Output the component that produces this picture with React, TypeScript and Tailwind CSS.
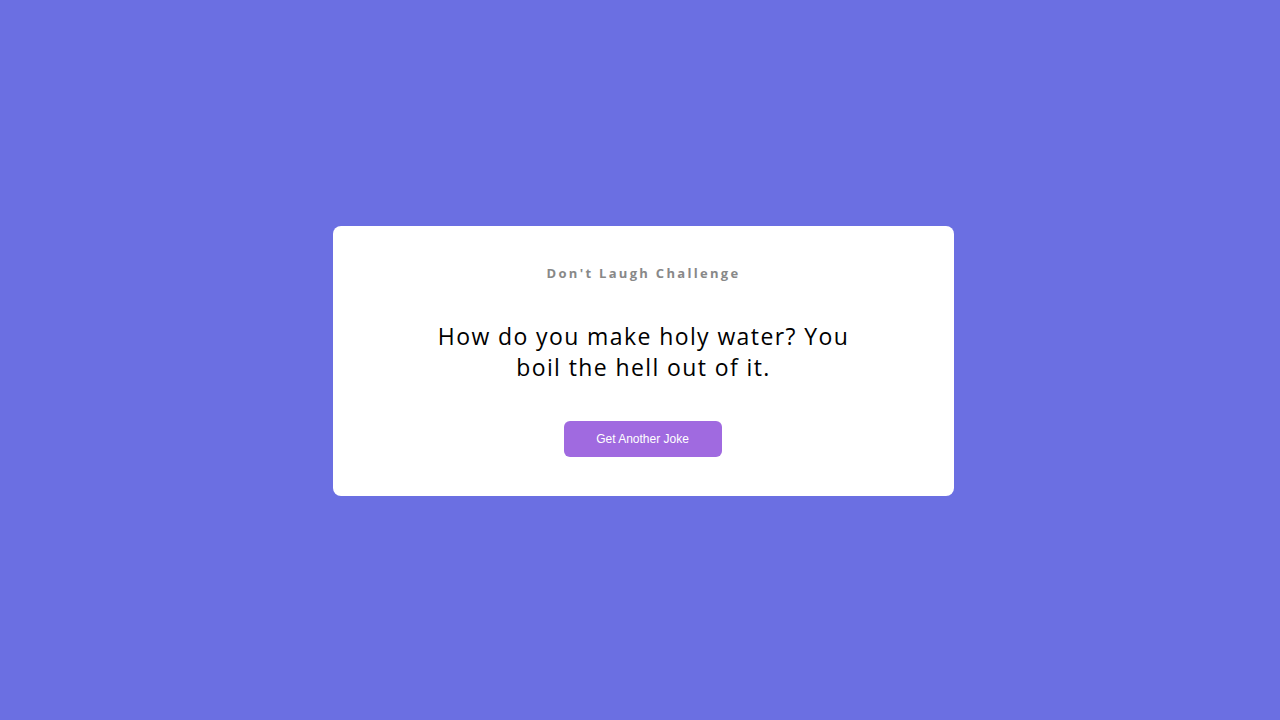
const App = () => {
  return (
    <main className="flex min-h-screen w-full items-center justify-center bg-[#6b6fe2] pl-[7px] pt-px font-['Open_Sans',sans-serif]">
      {/* カード */}
      <section className="flex w-[621px] flex-col items-center gap-[38px] rounded-lg bg-white px-[38px] pt-[37px] pb-[39px] text-center">
        <h3 className="text-[13px] leading-5 font-bold tracking-[2.3px] text-[#888888]">
          Don't Laugh Challenge
        </h3>
        <p className="max-w-[425px] text-[23px] leading-[31px] tracking-[1.4px] text-black">
          How do you make holy water? You boil the hell out of it.
        </p>
        <button className="-ml-0.5 h-9 w-[158px] rounded-md bg-[#a06ae0] font-['Liberation_Sans',sans-serif] text-[12px] text-white">
          Get Another Joke
        </button>
      </section>
    </main>
  );
};

export default App;
